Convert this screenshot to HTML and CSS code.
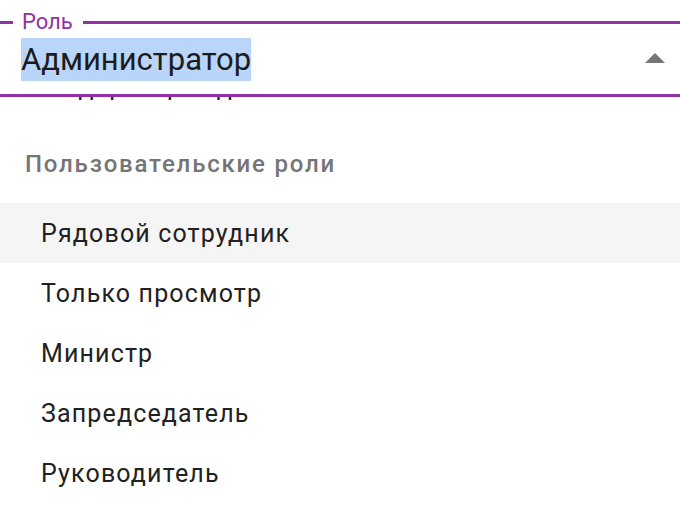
FILE: index.html
```html
<!DOCTYPE html>
<html lang="ru">
<head>
<meta charset="utf-8">
<link rel="stylesheet" href="styles.css">
</head>
<body>
<div class="field">
  <span class="field-label">Роль</span>
  <div class="field-value"><span class="selected">Администратор</span></div>
  <svg class="arrow" width="20" height="10" viewBox="0 0 20 10"><polygon points="0,10 10,0 20,10" fill="#757575"/></svg>
</div>
<div class="list">
  <div class="peek"><div class="item peek-item">Модератор отдела</div></div>
  <div class="subheader">Пользовательские роли</div>
  <div class="item item-active">Рядовой сотрудник</div>
  <div class="item">Только просмотр</div>
  <div class="item">Министр</div>
  <div class="item">Запредседатель</div>
  <div class="item">Руководитель</div>
</div>
</body>
</html>
```
FILE: styles.css
```css
html, body {
  margin: 0;
  padding: 0;
  background: #ffffff;
  overflow: hidden;
  font-family: Roboto, "Noto Sans", sans-serif;
}
body {
  width: 680px;
  height: 510px;
}
.field {
  position: relative;
  background: #ffffff;
  margin: 21px -6px 0 -6px;
  height: 70px;
  border: 3px solid #9330a8;
  border-radius: 4px;
  display: flex;
  align-items: center;
  padding: 0 18px 0 24px;
}
.field-label {
  position: absolute;
  top: -15px;
  left: 16px;
  padding: 0 10px 0 9px;
  background: #ffffff;
  color: #9330a8;
  font-size: 22px;
  line-height: 26px;
}
.field-value {
  flex: 1;
  display: flex;
  align-items: center;
}
.selected {
  display: inline-block;
  background: #b9d6fa;
  color: #1c1c1c;
  font-size: 31px;
  line-height: 43px;
}
.arrow {
  display: block;
  margin-top: -2px;
}
.peek {
  height: 3px;
  overflow: hidden;
}
.peek-item {
  margin-top: -39px;
  color: #666666;
}
.item {
  height: 60px;
  display: flex;
  align-items: center;
  padding-left: 41px;
  font-size: 25px;
  letter-spacing: 1.15px;
  color: #212121;
}
.item-active {
  background: #f5f5f5;
}
.subheader {
  height: 60px;
  margin: 34px 0 9px 0;
  display: flex;
  align-items: center;
  padding-left: 25px;
  font-size: 24px;
  letter-spacing: 1.8px;
  font-weight: 500;
  color: #757575;
}
```
